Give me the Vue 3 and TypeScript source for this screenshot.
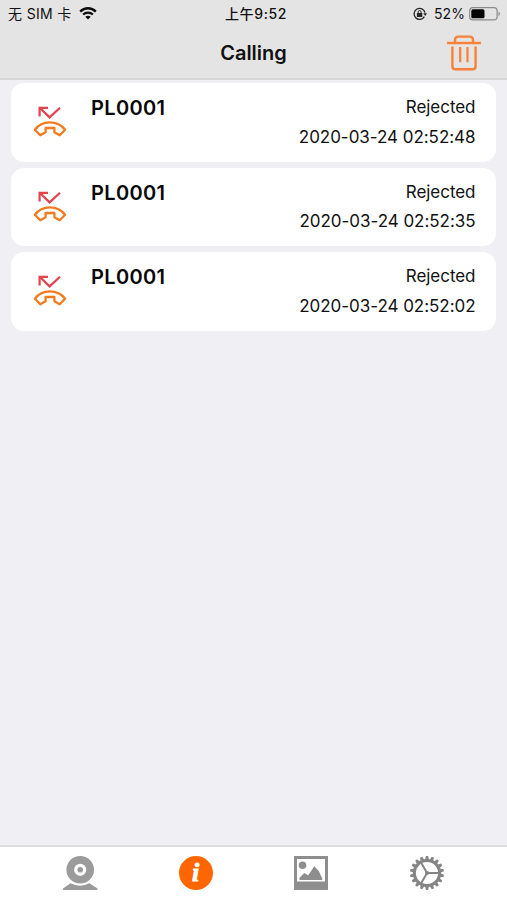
<script setup lang="ts">
interface CallRecord {
  id: number
  device: string
  status: string
  time: string
}

const calls: CallRecord[] = [
  { id: 1, device: 'PL0001', status: 'Rejected', time: '2020-03-24 02:52:48' },
  { id: 2, device: 'PL0001', status: 'Rejected', time: '2020-03-24 02:52:35' },
  { id: 3, device: 'PL0001', status: 'Rejected', time: '2020-03-24 02:52:02' },
]

const teeth: number[] = Array.from({ length: 18 }, (_, i) => i * 20)
</script>

<template>
  <div class="screen">
    <header class="top">
      <div class="status-bar">
        <div class="carrier">
          <span class="network">无 SIM 卡</span>
          <svg class="wifi" width="18" height="14" viewBox="0 0 18 14" fill="none" stroke="#0c0c0c">
            <path d="M1.2 4.6C5.6 .1 12.4 .1 16.8 4.6" stroke-width="2.3" />
            <path d="M4.1 7.6C6.9 4.9 11.1 4.9 13.9 7.6" stroke-width="2.1" />
            <path d="M6.3 9.7C7.9 8.3 10.1 8.3 11.7 9.7L9 12.4Z" fill="#0c0c0c" stroke="none" />
          </svg>
        </div>
        <span class="clock">上午9:52</span>
        <div class="power">
          <svg class="lock" width="14" height="14" viewBox="0 0 14 14" fill="none" stroke="#242424">
            <path d="M11.4 9.6A5.5 5.5 0 1 1 12 5.6" stroke-width="1.3" />
            <path d="M10.2 6.2H14L12.2 9Z" fill="#242424" stroke="none" />
            <rect x="3.9" y="6.1" width="5.4" height="3.8" rx=".5" fill="#242424" stroke="none" />
            <path d="M5.1 6.5V5.1a1.5 1.5 0 0 1 3 0v1.4" stroke-width="1" />
          </svg>
          <span class="percent">52%</span>
          <svg class="battery" width="32" height="14" viewBox="0 0 32 14">
            <rect x=".7" y=".7" width="27.4" height="12.2" rx="3.2" fill="none" stroke="#8a8a8a" stroke-width="1.2" />
            <rect x="2.3" y="2.3" width="13.2" height="9" rx="1.6" fill="#050505" />
            <path d="M29.5 4.7c1.8.5 1.8 3.8 0 4.3Z" fill="#8a8a8a" />
          </svg>
        </div>
      </div>
      <div class="nav">
        <h1>Calling</h1>
        <button class="trash" aria-label="Delete">
          <svg width="36" height="38" viewBox="0 0 36 38" fill="none" stroke="#f58238" stroke-width="2.4" stroke-linejoin="round">
            <path d="M1 9H35" />
            <path d="M9 8.6V6Q9 2.6 12.2 2.6H23.8Q27 2.6 27 6V8.6" />
            <path d="M6.4 12.6V32.2Q6.4 35.2 9.2 35.2H26.8Q29.6 35.2 29.6 32.2V12.6" />
            <path d="M14.2 13V28.2M21.5 13V28.2" stroke-width="2.2" />
          </svg>
        </button>
      </div>
    </header>

    <main class="list">
      <article v-for="call in calls" :key="call.id" class="card">
        <svg class="missed" width="34" height="34" viewBox="0 0 34 34" fill="none">
          <g stroke="#e2434c" stroke-width="2.2">
            <path d="M7.5 3.5L16.6 12.4L27 2.7" />
            <path d="M6.6 11.4V2.9H15" />
          </g>
          <path
            d="M1.9 24.8C9.2 15 24.6 15 32.1 24.8L26.7 30.2L21.4 27.2V23H12.6V27.2L7.2 30.2Z"
            stroke="#f37a1d" stroke-width="2.3" stroke-linejoin="round"
          />
        </svg>
        <h2>{{ call.device }}</h2>
        <div class="details">
          <span class="state">{{ call.status }}</span>
          <time>{{ call.time }}</time>
        </div>
      </article>
    </main>

    <nav class="tabs">
      <button aria-label="Camera">
        <svg width="36" height="36" viewBox="0 0 36 36" fill="#9b9b9b">
          <path d="M1 35V33.5L8.5 28.3Q18 33 27.5 28.3L35.5 33.5V35Z" />
          <circle cx="18.2" cy="14.8" r="13.8" />
          <circle cx="18.2" cy="14.8" r="6.1" fill="#fff" />
          <circle cx="18.2" cy="14.8" r="2.8" />
        </svg>
      </button>
      <button aria-label="Messages">
        <span class="info">i</span>
      </button>
      <button aria-label="Gallery">
        <svg width="36" height="36" viewBox="0 0 36 36" fill="#8e8e8e">
          <path fill-rule="evenodd" d="M1 1H35V35H1ZM4 4V26.5H32V4Z" />
          <circle cx="9.5" cy="10.3" r="3.8" />
          <path d="M6.5 25V22.8L11.3 18L15.2 20.2L21.3 11.2L25.7 16.1L29.2 23.3V25Z" />
        </svg>
      </button>
      <button aria-label="Settings">
        <svg width="36" height="36" viewBox="0 0 36 36" fill="none" stroke="#858585">
          <path
            v-for="angle in teeth" :key="angle" :transform="`rotate(${angle} 18 18)`"
            d="M16 5L16.9 1H19.1L20 5Z" fill="#858585" stroke="none"
          />
          <circle cx="18" cy="18" r="12.6" stroke-width="3" />
          <path d="M18 18H30M18 18L12 7.6M18 18L12 28.4" stroke-width="2" />
          <circle cx="18" cy="18" r="2.1" fill="#858585" stroke="none" />
        </svg>
      </button>
    </nav>
  </div>
</template>

<style>
body {
  margin: 0;
}
</style>

<style scoped>
.screen {
  display: flex;
  flex-direction: column;
  width: 507px;
  height: 900px;
  overflow: hidden;
  background: #efeff4;
  color: #111;
  font-family: Inter, "Noto Sans CJK SC", sans-serif;
}

button {
  display: flex;
  padding: 0;
  border: 0;
  background: none;
}

.top {
  box-sizing: border-box;
  height: 80px;
  flex: none;
  background: #e4e4e4;
  border-bottom: 2px solid #d6d6d7;
}

.status-bar {
  display: grid;
  grid-template-columns: 1fr auto 1fr;
  align-items: center;
  height: 27px;
  padding: 0 6px 0 8px;
  font-size: 14px;
  line-height: 27px;
  white-space: nowrap;
}

.carrier,
.power {
  display: flex;
  align-items: center;
}

.network {
  letter-spacing: 0.35px;
}

.wifi {
  margin-left: 7px;
}

.clock {
  margin-left: 3px;
  font-weight: 500;
  letter-spacing: 0.6px;
}

.power {
  justify-content: flex-end;
}

.lock {
  margin-right: 7px;
}

.percent {
  letter-spacing: 0.1px;
}

.battery {
  margin-left: 4px;
}

.nav {
  display: grid;
  grid-template-columns: 1fr auto 1fr;
  align-items: center;
  height: 51px;
  padding: 0 25px;
}

h1 {
  grid-column: 2;
  margin: 0;
  padding-top: 1px;
  font-size: 20px;
  font-weight: 600;
  line-height: 50px;
}

.trash {
  justify-self: end;
}

.list {
  display: flex;
  flex: 1;
  flex-direction: column;
  gap: 6px;
  padding: 3px 11px 0;
}

.card {
  display: flex;
  align-items: flex-start;
  box-sizing: border-box;
  height: 78.5px;
  padding: 10px 20.5px 0 22px;
  border-radius: 13px;
  background: #fff;
}

.missed {
  margin: 12px 24px 0 0;
}

h2 {
  margin: 0;
  color: #080808;
  font-size: 20px;
  font-weight: 600;
  letter-spacing: 0.35px;
  line-height: 30px;
}

.details {
  display: flex;
  flex-direction: column;
  align-items: flex-end;
  margin-left: auto;
  font-size: 17px;
  letter-spacing: -0.04px;
  line-height: 29.5px;
}

.tabs {
  display: flex;
  box-sizing: border-box;
  height: 55px;
  flex: none;
  gap: 79.7px;
  padding: 8px 0 0 62px;
  border-top: 2px solid #dedee1;
  background: #fff;
}

.info {
  width: 34px;
  height: 34px;
  margin: 1px;
  border-radius: 50%;
  background: #ff6500;
  color: #fff;
  font: italic bold 26px/34px "Liberation Serif", serif;
  -webkit-text-stroke: 0.9px #fff;
  text-align: center;
}
</style>
